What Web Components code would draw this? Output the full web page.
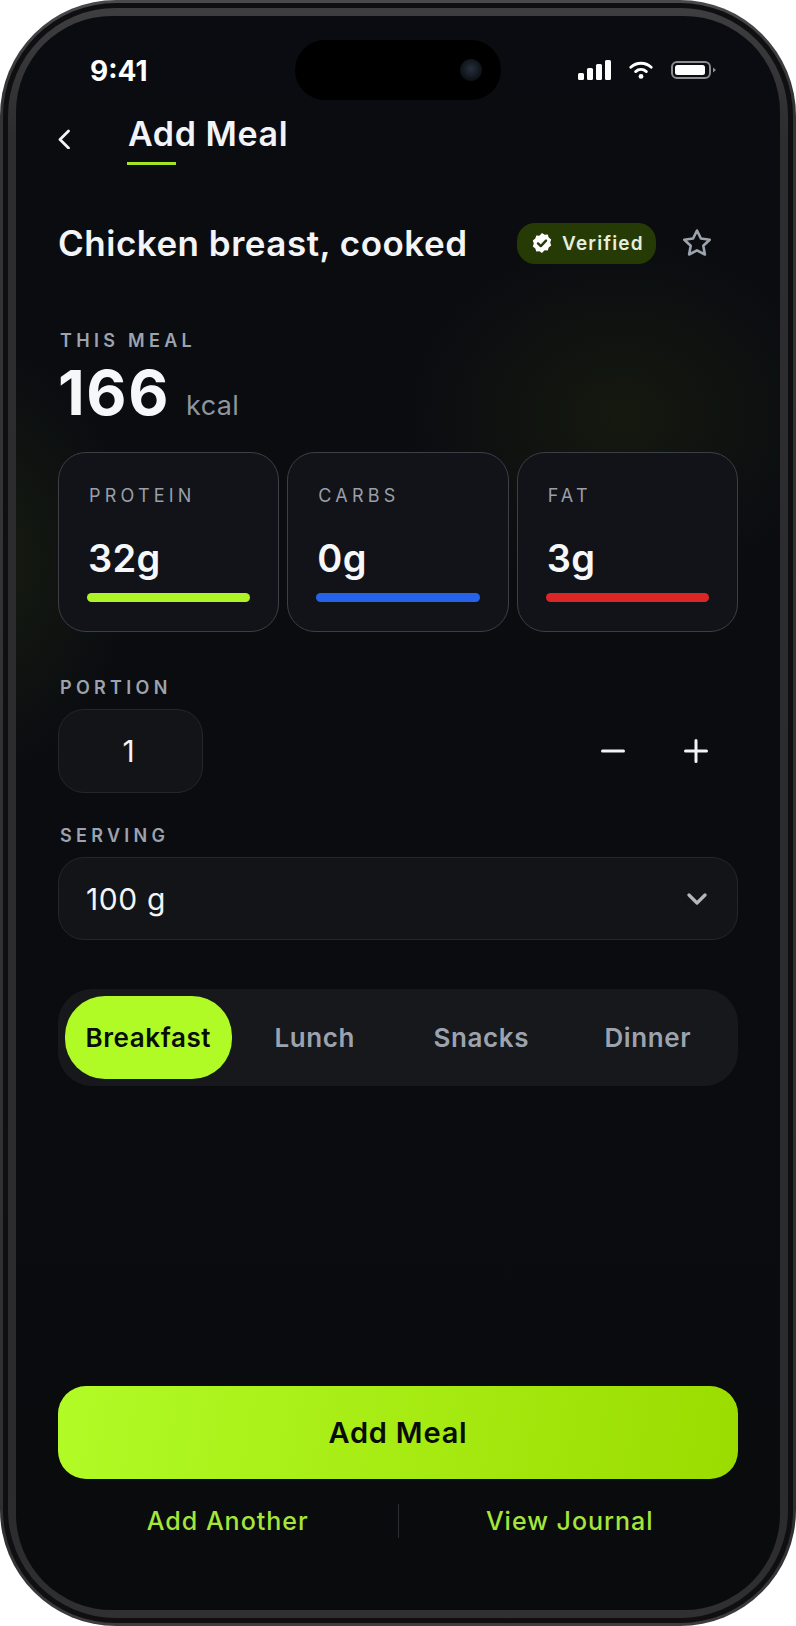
<!DOCTYPE html>
<html>
<head>
<meta charset="utf-8">
<title>Add Meal</title>
<style>
  html, body { margin: 0; background: #fff; }
  body { font-family: Inter, "Liberation Sans", sans-serif; color: #f3f5f7; }
</style>
</head>
<body>

<phone-frame>
  <status-bar></status-bar>
  <app-header>Add Meal</app-header>
  <food-title>Chicken breast, cooked</food-title>
  <calorie-summary value="166" unit="kcal">THIS MEAL</calorie-summary>
  <macro-row>
    <macro-card label="PROTEIN" value="32g" color="#aef426"></macro-card>
    <macro-card label="CARBS" value="0g" color="#2563eb"></macro-card>
    <macro-card label="FAT" value="3g" color="#dc2626"></macro-card>
  </macro-row>
  <portion-field value="1">PORTION</portion-field>
  <serving-field value="100 g">SERVING</serving-field>
  <meal-tabs active="Breakfast" items="Breakfast,Lunch,Snacks,Dinner"></meal-tabs>
  <meal-actions></meal-actions>
</phone-frame>

<script>
class PhoneFrame extends HTMLElement {
  constructor() {
    super();
    this.attachShadow({mode: 'open'}).innerHTML = `
      <style>
        :host { display: block; width: 796px; height: 1626px; }
        .outer { box-sizing: border-box; height: 100%; padding: 3px; border-radius: 116px;
          background: linear-gradient(180deg, #4a4a4c 0, #343436 6%, #303032 94%, #3c3c3e 100%); }
        .gap { box-sizing: border-box; height: 100%; padding: 5px; border-radius: 113px; background: #0f0f11; }
        .rim { box-sizing: border-box; height: 100%; padding: 8px; border-radius: 108px;
          background: linear-gradient(180deg, #3e3e41 0, #2d2d30 8%, #2b2b2e 92%, #303033 100%); }
        .screen { box-sizing: border-box; height: 100%; border-radius: 96px; overflow: hidden; position: relative;
          padding: 0 42px;
          background:
            radial-gradient(220px 180px at 604px 400px, rgba(104,128,12,.11), rgba(104,128,12,0) 100%),
            radial-gradient(150px 220px at -30px 545px, rgba(110,140,16,.12), rgba(110,140,16,0) 100%),
            linear-gradient(180deg, #0a0c11 0%, #0a0c10 50%, #090b0d 100%); }
      </style>
      <div class="outer"><div class="gap"><div class="rim"><div class="screen"><slot></slot></div></div></div></div>`;
  }
}
customElements.define('phone-frame', PhoneFrame);

class StatusBar extends HTMLElement {
  constructor() {
    super();
    this.attachShadow({mode: 'open'}).innerHTML = `
      <style>
        :host { display: flex; align-items: center; justify-content: space-between; height: 60px;
          margin: 24px -42px 0; padding: 0 64px 0 74px; position: relative; }
        .time { font: 700 28px/1 Inter, sans-serif; color: #fff; position: relative; top: 1px; }
        .island { position: absolute; left: 279px; top: 0; width: 206px; height: 60px; border-radius: 30px; background: #000; }
        .cam { position: absolute; right: 19px; top: 19px; width: 22px; height: 22px; border-radius: 50%;
          background: radial-gradient(circle at 50% 45%, #26303c, #10151c 60%, #05070a); }
        .icons { display: flex; align-items: center; gap: 18px; }
        svg { display: block; }
      </style>
      <span class="time">9:41</span>
      <div class="island"><div class="cam"></div></div>
      <div class="icons">
        <svg width="33" height="20" viewBox="0 0 33 20" fill="#fff">
          <rect x="0" y="13" width="6" height="7" rx="1.5"/><rect x="9" y="8" width="6" height="12" rx="1.5"/>
          <rect x="18" y="4" width="6" height="16" rx="1.5"/><rect x="27" y="0" width="6" height="20" rx="1.5"/>
        </svg>
        <svg width="24" height="18" viewBox="0 0 24 18" fill="none" stroke="#fff" stroke-width="2.8" stroke-linecap="round">
          <path d="M1.8 6.2C7.6 .9 16.4 .9 22.2 6.2"/><path d="M6.6 10.6C9.8 7.8 14.2 7.8 17.4 10.6"/>
          <circle cx="12" cy="15.4" r="2.4" fill="#fff" stroke="none"/>
        </svg>
        <svg width="45" height="18" viewBox="0 0 45 18" fill="none">
          <rect x="1" y="1" width="38" height="16" rx="5" stroke="#8b8c8e" stroke-width="2"/>
          <rect x="4" y="4" width="30" height="10" rx="2.5" fill="#fff"/>
          <path d="M42 6.5l3 2.5-3 2.5z" fill="#8b8c8e"/>
        </svg>
      </div>`;
  }
}
customElements.define('status-bar', StatusBar);

class AppHeader extends HTMLElement {
  constructor() {
    super();
    this.attachShadow({mode: 'open'}).innerHTML = `
      <style>
        :host { display: flex; align-items: flex-start; margin-top: 16px; height: 50px; }
        svg { display: block; margin-top: 13px; }
        .title { margin-left: 58px; font: 600 34px/36px Inter, sans-serif; letter-spacing: .6px; color: #f2f4f7; }
        .title::after { content: ""; display: block; width: 49px; height: 3px; margin: 10px 0 0 -1px; background: #a6e422; }
      </style>
      <svg width="12" height="20" viewBox="0 0 12 20" fill="none" stroke="#f2f4f7" stroke-width="2.8" stroke-linecap="round" stroke-linejoin="round">
        <path d="M10.5 2L2 10.5 10.5 19"/>
      </svg>
      <div class="title"><slot></slot></div>`;
  }
}
customElements.define('app-header', AppHeader);

class FoodTitle extends HTMLElement {
  constructor() {
    super();
    this.attachShadow({mode: 'open'}).innerHTML = `
      <style>
        :host { display: flex; align-items: center; margin-top: 56px; height: 42px; }
        h1 { margin: 0; flex: 1; font: 600 35px/42px Inter, sans-serif; letter-spacing: .5px; color: #f2f4f7; white-space: nowrap; }
        .pill { display: flex; align-items: center; gap: 10px; box-sizing: border-box; width: 139px; height: 41px;
          padding-left: 15px; border-radius: 18px; background: #263a05;
          font: 600 19px/1 Inter, sans-serif; letter-spacing: 1.2px; color: #e7eedc; }
        .star { margin: 0 26px 0 26px; display: block; }
      </style>
      <h1><slot></slot></h1>
      <div class="pill">
        <svg width="20" height="20" viewBox="0 0 20 20">
          <path fill="#fff" d="M10 0l2.6 1.8 3.1-.2 1 3 2.5 1.9-1 3 1 3-2.5 1.9-1 3-3.1-.2L10 20l-2.6-1.8-3.1.2-1-3L.8 13.5l1-3-1-3 2.5-1.9 1-3 3.1.2z"/>
          <path fill="none" stroke="#263a05" stroke-width="2.4" stroke-linecap="round" stroke-linejoin="round" d="M6 10.4l2.8 2.7L14 7.6"/>
        </svg>
        <span>Verified</span>
      </div>
      <svg class="star" width="30" height="30" viewBox="0 0 30 30" fill="none" stroke="#9ca3af" stroke-width="2.6" stroke-linejoin="round">
        <path d="M15 2.5l3.9 8 8.8 1.2-6.4 6.1 1.6 8.7-7.9-4.2-7.9 4.2 1.6-8.7-6.4-6.1 8.8-1.2z"/>
      </svg>`;
  }
}
customElements.define('food-title', FoodTitle);

class CalorieSummary extends HTMLElement {
  constructor() {
    super();
    this.attachShadow({mode: 'open'}).innerHTML = `
      <style>
        :host { display: block; margin-top: 66px; }
        .label { font: 600 18px/22px Inter, sans-serif; letter-spacing: 4.3px; color: #9ca3af; padding-left: 2px; }
        .line { display: flex; align-items: baseline; gap: 16px; margin-top: 6px; height: 70px; }
        .val { font: 700 62px/70px Inter, sans-serif; letter-spacing: 1.6px; color: #f5f7f9; }
        .unit { font: 400 27px/1 Inter, sans-serif; letter-spacing: .4px; color: #8f949d; }
      </style>
      <div class="label"><slot></slot></div>
      <div class="line"><span class="val">${this.getAttribute('value')}</span><span class="unit">${this.getAttribute('unit')}</span></div>`;
  }
}
customElements.define('calorie-summary', CalorieSummary);

class MacroRow extends HTMLElement {
  constructor() {
    super();
    this.attachShadow({mode: 'open'}).innerHTML = `
      <style>
        :host { display: grid; grid-template-columns: repeat(3, 1fr); gap: 8px; margin-top: 24px; }
      </style>
      <slot></slot>`;
  }
}
customElements.define('macro-row', MacroRow);

class MacroCard extends HTMLElement {
  constructor() {
    super();
    this.attachShadow({mode: 'open'}).innerHTML = `
      <style>
        :host { display: block; box-sizing: border-box; height: 180px; padding: 32px 28px 0 29px;
          border: 1.5px solid #3c3f45; border-radius: 28px; background: #111318; }
        .label { font: 400 18px/22px Inter, sans-serif; letter-spacing: 4.2px; color: #9a9fa8; padding-left: 1px; }
        .val { margin-top: 29px; font: 600 38px/44px Inter, sans-serif; letter-spacing: .3px; color: #f5f7f9; }
        .bar { height: 9px; margin: 13px 0 0 -1px; border-radius: 5px; background: ${this.getAttribute('color')}; }
      </style>
      <div class="label">${this.getAttribute('label')}</div>
      <div class="val">${this.getAttribute('value')}</div>
      <div class="bar"></div>`;
  }
}
customElements.define('macro-card', MacroCard);

const fieldLabelStyle = `.label { font: 600 18px/22px Inter, sans-serif; letter-spacing: 4.3px; color: #9ca3af; padding-left: 2px; }`;

class PortionField extends HTMLElement {
  constructor() {
    super();
    this.attachShadow({mode: 'open'}).innerHTML = `
      <style>
        :host { display: block; margin-top: 45px; }
        ${fieldLabelStyle}
        .row { display: flex; align-items: center; margin-top: 10px; }
        .input { box-sizing: border-box; width: 145px; height: 84px; display: flex; align-items: center; justify-content: center;
          padding-right: 4px; border: 1.5px solid #24262b; border-radius: 26px; background: #121418;
          font: 400 30px/1 Inter, sans-serif; color: #f2f4f7; }
        .steppers { margin-left: auto; display: flex; align-items: center; gap: 59px; padding-right: 30px; }
        svg { display: block; }
      </style>
      <div class="label"><slot></slot></div>
      <div class="row">
        <div class="input">${this.getAttribute('value')}</div>
        <div class="steppers">
          <svg width="24" height="24" viewBox="0 0 24 24" stroke="#f2f4f7" stroke-width="3" stroke-linecap="round"><path d="M1.5 12h21"/></svg>
          <svg width="24" height="24" viewBox="0 0 24 24" stroke="#f2f4f7" stroke-width="3" stroke-linecap="round"><path d="M1.5 12h21M12 1.5v21"/></svg>
        </div>
      </div>`;
  }
}
customElements.define('portion-field', PortionField);

class ServingField extends HTMLElement {
  constructor() {
    super();
    this.attachShadow({mode: 'open'}).innerHTML = `
      <style>
        :host { display: block; margin-top: 32px; }
        ${fieldLabelStyle}
        .select { box-sizing: border-box; height: 83px; margin-top: 10px; display: flex; align-items: center; justify-content: space-between;
          padding: 0 30px 0 27px; border: 1.5px solid #24262b; border-radius: 26px; background: #121418;
          font: 400 30px/1 Inter, sans-serif; letter-spacing: .6px; color: #f2f4f7; }
        svg { display: block; }
      </style>
      <div class="label"><slot></slot></div>
      <div class="select">
        <span>${this.getAttribute('value')}</span>
        <svg width="20" height="14" viewBox="0 0 20 14" fill="none" stroke="#b4b7bc" stroke-width="3.2" stroke-linecap="round" stroke-linejoin="round"><path d="M2 3l8 8 8-8"/></svg>
      </div>`;
  }
}
customElements.define('serving-field', ServingField);

class MealTabs extends HTMLElement {
  constructor() {
    super();
    const active = this.getAttribute('active');
    const tabs = this.getAttribute('items').split(',')
      .map(t => `<div class="tab${t === active ? ' on' : ''}">${t}</div>`).join('');
    this.attachShadow({mode: 'open'}).innerHTML = `
      <style>
        :host { display: grid; grid-template-columns: repeat(4, 1fr); box-sizing: border-box; height: 97px; margin-top: 49px;
          padding: 7px; border-radius: 34px; background: #16181b; }
        .tab { display: flex; align-items: center; justify-content: center; border-radius: 40px;
          font: 600 26px/1 Inter, sans-serif; letter-spacing: .6px; color: #9ca3af; }
        .on { background: #b0fb26; color: #0a0c08; }
      </style>
      ${tabs}`;
  }
}
customElements.define('meal-tabs', MealTabs);

class MealActions extends HTMLElement {
  constructor() {
    super();
    this.attachShadow({mode: 'open'}).innerHTML = `
      <style>
        :host { display: block; margin-top: 300px; }
        .cta { height: 93px; display: flex; align-items: center; justify-content: center; border-radius: 28px;
          background: linear-gradient(100deg, #b2fb26 0%, #9bdc00 100%);
          font: 600 29px/1 Inter, sans-serif; letter-spacing: .8px; color: #0a0c08; }
        .links { display: grid; grid-template-columns: 1fr 1px 1fr; align-items: center; height: 34px; margin-top: 25px;
          font: 500 25px/1 Inter, sans-serif; letter-spacing: 1px; color: #a6e63a; }
        .links span { text-align: center; }
        .links span:last-child { padding-left: 3px; }
        .links i { display: block; height: 34px; background: #2a2c30; }
      </style>
      <div class="cta">Add Meal</div>
      <div class="links"><span>Add Another</span><i></i><span>View Journal</span></div>`;
  }
}
customElements.define('meal-actions', MealActions);
</script>
</body>
</html>
